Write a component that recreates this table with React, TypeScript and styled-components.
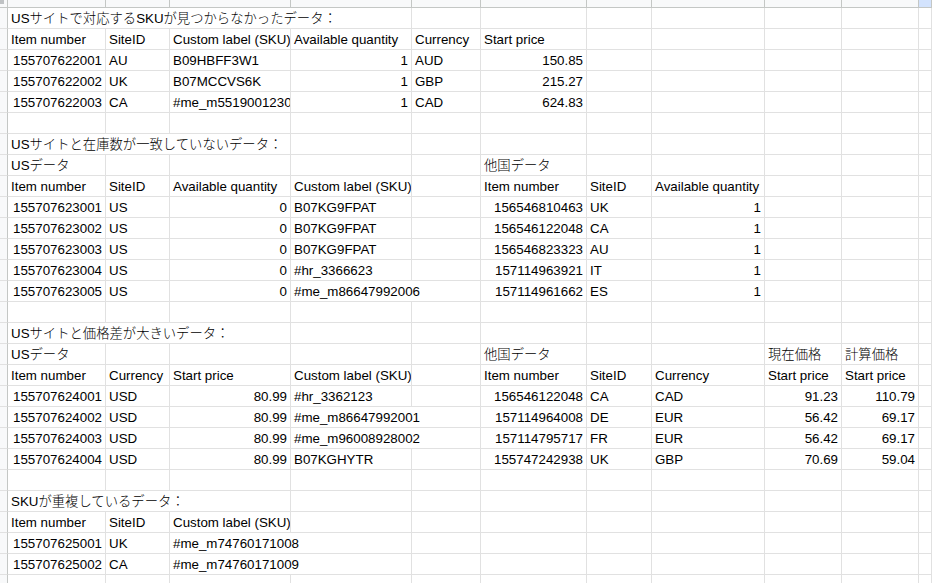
import React from "react";
import styled, { createGlobalStyle } from "styled-components";

const Global = createGlobalStyle`
  html, body { margin: 0; padding: 0; background: #ffffff; overflow: hidden; }
  #root { width: 932px; height: 583px; overflow: hidden; }
`;

const TEMPLATE = "8px 98px 64px 121px 121px 69px 106px 65px 113px 77px 77px 1fr";
const COLS = 11; // A..K (K is last, flexible)

const Sheet = styled.div`
  display: flex;
  flex-direction: column;
  font-family: "Liberation Sans", Arial, "Noto Sans CJK JP", sans-serif;
  font-size: 13.33px;
  font-weight: 300;
  color: #000000;
`;

const HeadStrip = styled.div`
  display: grid;
  grid-template-columns: ${TEMPLATE};
  height: 8px;
`;

const HeadCell = styled.div<{ $selected?: boolean }>`
  box-sizing: border-box;
  background: ${(p) => (p.$selected ? "#d3e3fd" : "#f8f9fa")};
  border-right: 1px solid #c4c7c5;
  border-bottom: 1px solid #c4c7c5;
`;

const Corner = styled.div`
  box-sizing: border-box;
  background: #f8f9fa;
  border-right: 1px solid #c4c7c5;
  border-bottom: 1px solid #c4c7c5;
  display: flex;
  align-items: flex-start;
  justify-content: flex-start;
`;

const CornerMark = styled.span`
  width: 4px;
  height: 4px;
  background: #bfc2c4;
`;

const Row = styled.div`
  display: grid;
  grid-template-columns: ${TEMPLATE};
  height: 21px;
`;

const RowHead = styled.div`
  box-sizing: border-box;
  background: #f8f9fa;
  border-right: 1px solid #c4c7c5;
  border-bottom: 1px solid #e1e1e1;
`;

const Cell = styled.div<{ $right?: boolean; $span: number }>`
  box-sizing: border-box;
  grid-column: span ${(p) => p.$span};
  height: 21px;
  padding: 2px 3px 0 3px;
  line-height: 17px;
  white-space: nowrap;
  overflow: hidden;
  text-align: ${(p) => (p.$right ? "right" : "left")};
  border-right: 1px solid #e1e1e1;
  border-bottom: 1px solid #e1e1e1;
`;

type C = { c: number; t: string; r?: boolean; s?: number };

const r = (c: number, t: string): C => ({ c, t, r: true });
const l = (c: number, t: string, s = 1): C => ({ c, t, s });

const rows: C[][] = [
  [l(0, "USサイトで対応するSKUが見つからなかったデータ：", 4)],
  [l(0, "Item number"), l(1, "SiteID"), l(2, "Custom label (SKU)"), l(3, "Available quantity"), l(4, "Currency"), l(5, "Start price")],
  [r(0, "155707622001"), l(1, "AU"), l(2, "B09HBFF3W1"), r(3, "1"), l(4, "AUD"), r(5, "150.85")],
  [r(0, "155707622002"), l(1, "UK"), l(2, "B07MCCVS6K"), r(3, "1"), l(4, "GBP"), r(5, "215.27")],
  [r(0, "155707622003"), l(1, "CA"), l(2, "#me_m5519001230"), r(3, "1"), l(4, "CAD"), r(5, "624.83")],
  [],
  [l(0, "USサイトと在庫数が一致していないデータ：", 3)],
  [l(0, "USデータ"), l(5, "他国データ")],
  [l(0, "Item number"), l(1, "SiteID"), l(2, "Available quantity"), l(3, "Custom label (SKU)"), l(5, "Item number"), l(6, "SiteID"), l(7, "Available quantity")],
  [r(0, "155707623001"), l(1, "US"), r(2, "0"), l(3, "B07KG9FPAT"), r(5, "156546810463"), l(6, "UK"), r(7, "1")],
  [r(0, "155707623002"), l(1, "US"), r(2, "0"), l(3, "B07KG9FPAT"), r(5, "156546122048"), l(6, "CA"), r(7, "1")],
  [r(0, "155707623003"), l(1, "US"), r(2, "0"), l(3, "B07KG9FPAT"), r(5, "156546823323"), l(6, "AU"), r(7, "1")],
  [r(0, "155707623004"), l(1, "US"), r(2, "0"), l(3, "#hr_3366623"), r(5, "157114963921"), l(6, "IT"), r(7, "1")],
  [r(0, "155707623005"), l(1, "US"), r(2, "0"), l(3, "#me_m86647992006", 2), r(5, "157114961662"), l(6, "ES"), r(7, "1")],
  [],
  [l(0, "USサイトと価格差が大きいデータ：", 3)],
  [l(0, "USデータ"), l(5, "他国データ"), l(8, "現在価格"), l(9, "計算価格")],
  [l(0, "Item number"), l(1, "Currency"), l(2, "Start price"), l(3, "Custom label (SKU)"), l(5, "Item number"), l(6, "SiteID"), l(7, "Currency"), l(8, "Start price"), l(9, "Start price")],
  [r(0, "155707624001"), l(1, "USD"), r(2, "80.99"), l(3, "#hr_3362123"), r(5, "156546122048"), l(6, "CA"), l(7, "CAD"), r(8, "91.23"), r(9, "110.79")],
  [r(0, "155707624002"), l(1, "USD"), r(2, "80.99"), l(3, "#me_m86647992001", 2), r(5, "157114964008"), l(6, "DE"), l(7, "EUR"), r(8, "56.42"), r(9, "69.17")],
  [r(0, "155707624003"), l(1, "USD"), r(2, "80.99"), l(3, "#me_m96008928002", 2), r(5, "157114795717"), l(6, "FR"), l(7, "EUR"), r(8, "56.42"), r(9, "69.17")],
  [r(0, "155707624004"), l(1, "USD"), r(2, "80.99"), l(3, "B07KGHYTR"), r(5, "155747242938"), l(6, "UK"), l(7, "GBP"), r(8, "70.69"), r(9, "59.04")],
  [],
  [l(0, "SKUが重複しているデータ：", 3)],
  [l(0, "Item number"), l(1, "SiteID"), l(2, "Custom label (SKU)")],
  [r(0, "155707625001"), l(1, "UK"), l(2, "#me_m74760171008", 2)],
  [r(0, "155707625002"), l(1, "CA"), l(2, "#me_m74760171009", 2)],
  [],
  [],
];

function SheetRow({ cells }: { cells: C[] }) {
  const out: React.ReactNode[] = [];
  let col = 0;
  while (col < COLS) {
    const found = cells.find((x) => x.c === col);
    if (found) {
      const span = found.s ?? 1;
      out.push(
        <Cell key={col} $span={span} $right={found.r}>
          {found.t}
        </Cell>
      );
      col += span;
    } else {
      out.push(<Cell key={col} $span={1} />);
      col += 1;
    }
  }
  return (
    <Row>
      <RowHead />
      {out}
    </Row>
  );
}

export default function App() {
  return (
    <>
      <Global />
      <Sheet>
        <HeadStrip>
          <Corner>
            <CornerMark />
          </Corner>
          {Array.from({ length: COLS }).map((_, i) => (
            <HeadCell key={i} $selected={i === COLS - 1} />
          ))}
        </HeadStrip>
        {rows.map((cells, i) => (
          <SheetRow key={i} cells={cells} />
        ))}
      </Sheet>
    </>
  );
}
